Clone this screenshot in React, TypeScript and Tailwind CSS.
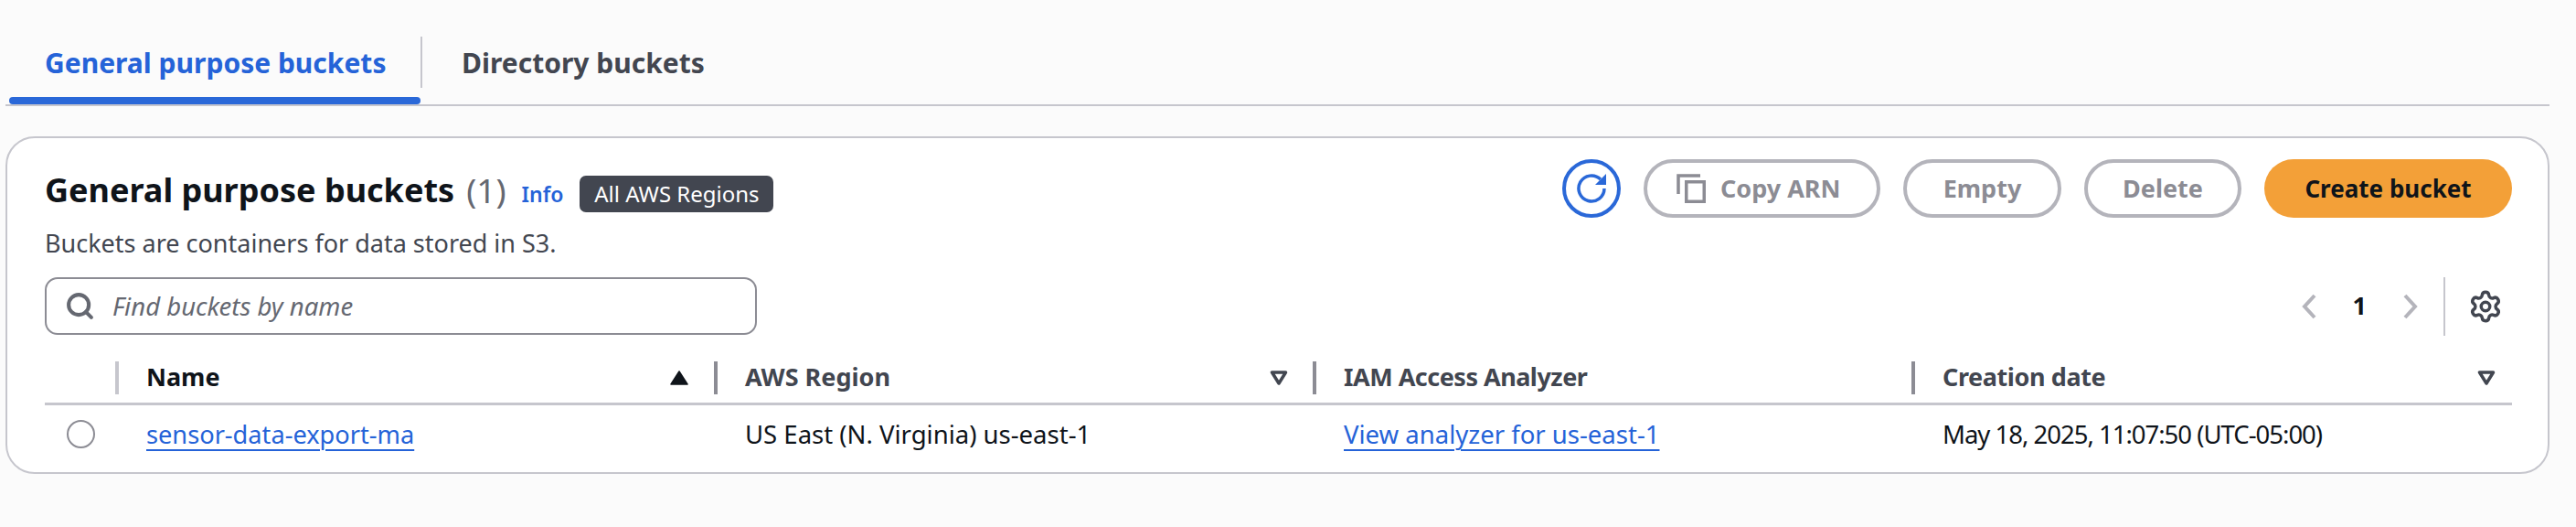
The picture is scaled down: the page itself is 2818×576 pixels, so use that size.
import type { ReactNode } from 'react'
import { Search, Settings } from 'lucide-react'

function HeaderCell({ label, width, sort, strong, light, sortClass, labelClass }: { label: string; width: string; sort?: 'up' | 'down'; strong?: boolean; light?: boolean; sortClass?: string; labelClass?: string }) {
  return (
    <div className={`flex h-[36px] items-center ${width}`}>
      <div className={`h-full w-[4px] shrink-0 ${light ? 'bg-[#c6c6cd]' : 'bg-[#8c8c94]'}`} />
      <span className={`ml-[30px] text-[27px] font-bold ${strong ? 'text-[#0f141a]' : 'text-[#424650]'} ${labelClass}`}>{label}</span>
      {sort === 'up' && (
        <svg className={`ml-auto h-[16px] w-[20px] ${sortClass}`} viewBox="0 0 20 16">
          <path d="M10 1 L19 15 L1 15 Z" fill="#0f141a" stroke="#0f141a" strokeWidth="1.5" strokeLinejoin="round" />
        </svg>
      )}
      {sort === 'down' && (
        <svg className={`ml-auto h-[16px] w-[20px] ${sortClass}`} viewBox="0 0 20 16">
          <path d="M2.5 2 L17.5 2 L10 14 Z" fill="none" stroke="#424650" strokeWidth="3.5" strokeLinejoin="round" />
        </svg>
      )}
    </div>
  )
}

function OutlineButton({ children, className }: { children: ReactNode; className: string }) {
  return (
    <div className={`flex h-[64px] items-center rounded-full border-[4px] border-[#b4b4bb] bg-white text-[27px] font-bold text-[#8c8c94] ${className}`}>
      {children}
    </div>
  )
}

export default function App() {
  return (
    <div className="h-[576px] w-[2818px] bg-[#fbfbfb] pl-[6px] pr-[29px] pt-[34px] font-['Noto_Sans',sans-serif]">
      {/* Tabs */}
      <div className="flex h-[82px] border-b-[2px] border-[#c6c6cd]">
        <div className="relative h-[80px] w-[454px] pl-[43px] pt-[12px] text-[30px] font-bold text-[#2563d8]">
          General purpose buckets
          <div className="absolute bottom-0 left-[4px] h-[8px] w-[450px] rounded-[4px] bg-[#2a68d8]" />
        </div>
        <div className="mt-[6px] h-[56px] w-[2px] bg-[#c6c6cd]" />
        <div className="pl-[43px] pt-[12px] text-[30px] font-bold text-[#424650]">Directory buckets</div>
      </div>

      <div className="mt-[33px] h-[369px] rounded-[32px] border-[2px] border-[#c6c6cd] bg-white pl-[41px] pr-[39px] pt-[23px]">
        {/* Header */}
        <div className="flex items-start justify-between">
          <div className="pt-[7px]">
            <div className="flex h-[54px] items-center">
              <span className="text-[36px] font-bold text-[#0f141a]">General purpose buckets</span>
              <span className="ml-[13px] text-[37px] text-[#656871]">(1)</span>
              <span className="ml-[17px] mt-[8px] text-[23px] font-semibold text-[#2563d8]">Info</span>
              <span className="ml-[18px] mt-[8px] flex h-[40px] w-[212px] items-center justify-center rounded-[7px] bg-[#424650] text-[24px] text-white">All AWS Regions</span>
            </div>
            <div className="mt-[11px] text-[27px] text-[#424650]">Buckets are containers for data stored in S3.</div>
          </div>
          <div className="flex items-center gap-[25px]">
            <div className="flex h-[64px] w-[64px] items-center justify-center rounded-full border-[4px] border-[#2a68d8]">
              <svg className="h-[32px] w-[32px]" viewBox="0 0 32 32" fill="none" stroke="#2a68d8" strokeWidth="3.5">
                <path d="M25.9 6.1 A14 14 0 1 0 30 16" />
                <path d="M32 0 V12 H20 Z" fill="#2a68d8" stroke="none" />
              </svg>
            </div>
            <OutlineButton className="w-[259px] pl-[32px]">
              <svg className="mr-[16px] h-[32px] w-[32px]" viewBox="0 0 32 32" fill="none" stroke="#8c8c94" strokeWidth="3.5">
                <path d="M2 22 V2 H26" />
                <rect x="10.75" y="8.75" width="19.5" height="21.5" />
              </svg>
              Copy ARN
            </OutlineButton>
            <OutlineButton className="w-[173px] justify-center">Empty</OutlineButton>
            <OutlineButton className="w-[172px] justify-center">Delete</OutlineButton>
            <div className="flex h-[64px] w-[271px] items-center justify-center rounded-full bg-[#f3a038] text-[26px] font-bold text-[#0f141a]">Create bucket</div>
          </div>
        </div>

        {/* Filter and pagination */}
        <div className="mt-[16px] flex items-center justify-between">
          <div className="flex h-[63px] w-[779px] items-center rounded-[14px] border-[2px] border-[#8c8c94] pl-[20px]">
            <Search className="h-[33px] w-[33px] text-[#656871]" strokeWidth={3} />
            <span className="ml-[19px] text-[27.5px] italic text-[#656871]">Find buckets by name</span>
          </div>
          <div className="mr-[10px] flex items-center">
            <svg className="h-[28px] w-[16px]" viewBox="0 0 16 28" fill="none" stroke="#b4b4bb" strokeWidth="4">
              <path d="M14 2 L3 14 L14 26" />
            </svg>
            <span className="mx-[40px] text-[27px] font-bold text-[#0f141a]">1</span>
            <svg className="h-[28px] w-[16px]" viewBox="0 0 16 28" fill="none" stroke="#b4b4bb" strokeWidth="4">
              <path d="M2 2 L13 14 L2 26" />
            </svg>
            <div className="ml-[28px] mr-[25px] h-[64px] w-[2px] bg-[#c6c6cd]" />
            <Settings className="h-[38px] w-[38px] text-[#424650]" strokeWidth={2.2} />
          </div>
        </div>

        {/* Table */}
        <div className="mt-[28px] flex h-[48px] items-start border-b-[3px] border-[#c6c6cd] pl-[77px]">
          <HeaderCell label="Name" width="w-[655px]" sort="up" strong light sortClass="mr-[28px]" />
          <HeaderCell label="AWS Region" width="w-[655px]" sort="down" sortClass="mr-[27px]" />
          <HeaderCell label="IAM Access Analyzer" width="w-[655px]" labelClass="tracking-[-0.5px]" />
          <HeaderCell label="Creation date" width="flex-1" sort="down" sortClass="mr-[18px]" labelClass="tracking-[-0.4px]" />
        </div>

        <div className="flex h-[64px] items-center text-[27.5px] text-[#0f141a]">
          <div className="ml-[24px] h-[31px] w-[31px] rounded-full border-[2px] border-[#8c8c94]" />
          <div className="ml-[56px] w-[655px]"><span className="text-[27.2px] text-[#2563d8] underline decoration-2 underline-offset-[6px]">sensor-data-export-ma</span></div>
          <div className="w-[655px]">US East (N. Virginia) us-east-1</div>
          <div className="w-[655px]"><span className="text-[#2563d8] underline decoration-2 underline-offset-[6px]">View analyzer for us-east-1</span></div>
          <div className="tracking-[-1px]">May 18, 2025, 11:07:50 (UTC-05:00)</div>
        </div>
      </div>
    </div>
  )
}
